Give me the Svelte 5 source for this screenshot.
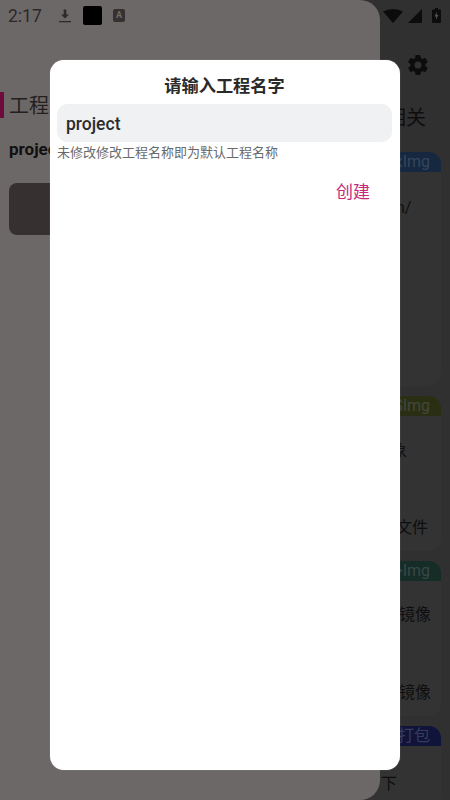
<script>
  const SECTIONS = [
    { tag: 'xImg', tagClass: 'blue', height: 234, rows: [{ text: 'n/', left: 396, top: 15 }] },
    { tag: 'SImg', tagClass: 'olive', height: 155, rows: [{ text: '象', left: 391, top: 13 }, { text: '文件', left: 396, top: 37 }] },
    { tag: '>Img', tagClass: 'green', height: 155, rows: [{ text: '镜像', left: 399, top: 12 }, { text: '镜像', left: 399, top: 38 }] },
    { tag: '打包', tagClass: 'navy', height: 84, rows: [{ text: '下', left: 381, top: 16 }] }
  ];
</script>

<div class="screen">
  <div class="page">
    <div class="page-top">
      <svg class="gear" viewBox="0 0 24 24" width="24" height="24" fill="#0c0c0c">
        <path d="M19.4 13c.04-.32.07-.66.07-1s-.03-.68-.07-1l2.1-1.65a.5.5 0 0 0 .12-.64l-2-3.46a.5.5 0 0 0-.6-.22l-2.49 1a7.3 7.3 0 0 0-1.73-1l-.38-2.65A.49.49 0 0 0 13.93 2h-4a.49.49 0 0 0-.49.42l-.38 2.65c-.63.26-1.2.6-1.73 1l-2.49-1a.5.5 0 0 0-.6.22l-2 3.46a.49.49 0 0 0 .12.64L4.47 11a7.9 7.9 0 0 0 0 2l-2.11 1.65a.5.5 0 0 0-.12.64l2 3.46c.12.22.39.3.6.22l2.49-1c.53.4 1.1.74 1.73 1l.38 2.65c.04.24.25.42.49.42h4c.24 0 .45-.18.49-.42l.38-2.65c.63-.26 1.2-.6 1.73-1l2.49 1c.23.08.48 0 .6-.22l2-3.46a.5.5 0 0 0-.12-.64zM12 15.500a3.500 3.500 0 1 1 0-7 3.500 3.500 0 0 1 0 7z"/>
      </svg>
      <div class="page-title">项目相关</div>
    </div>
    {#each SECTIONS as s}
      <section class="section" style="height:{s.height}px">
        <div class="tag {s.tagClass}">{s.tag}</div>
        {#each s.rows as r}
          <div class="row" style="margin-top:{r.top}px; padding-left:{r.left}px">{r.text}</div>
        {/each}
      </section>
    {/each}
  </div>

  <aside class="drawer">
    <div class="heading">工程</div>
    <div class="name">project</div>
    <div class="card"></div>
  </aside>

  <div class="status">
    <span class="time">2:17</span>
    <svg class="ic-download" viewBox="0 0 14 14" width="14" height="16" fill="#2e2a2a">
      <path d="M5.700 0.500h2.600v5h2.700L7 9.600 3 5.500h2.700zM1 12h12v1.200H1z"/>
    </svg>
    <span class="black-box"></span>
    <span class="a-box">A</span>
    <span class="spacer"></span>
    <svg viewBox="0 0 20 14" width="20" height="14" fill="#0c0c0c"><path d="M0 2.500Q10-2.500 20 2.500L10 14z"/></svg>
    <svg class="ic-signal" viewBox="0 0 14 14" width="14" height="14" fill="#0c0c0c"><path d="M14 0v14H0z"/></svg>
    <svg class="ic-battery" viewBox="0 0 9 15" width="9" height="15" fill="#0c0c0c">
      <path d="M3 0h3v1.500h2a1 1 0 0 1 1 1V14a1 1 0 0 1-1 1H1a1 1 0 0 1-1-1V2.500a1 1 0 0 1 1-1h2z"/>
      <path d="M5 3.500 2.500 8.500H4.300L3.800 12 6.500 7H4.600z" fill="#555"/>
    </svg>
  </div>

  <div class="modal">
    <h2 class="modal-title">请输入工程名字</h2>
    <div class="input">project</div>
    <p class="hint">未修改修改工程名称即为默认工程名称</p>
    <div class="actions">
      <button class="create">创建</button>
    </div>
  </div>
</div>

<style>
  :global(body) {
    margin: 0;
    background: #303031;
  }

  .screen {
    position: relative;
    width: 450px;
    height: 800px;
    overflow: hidden;
    background: #303031;
    font-family: Roboto, "Noto Sans CJK SC", sans-serif;
  }

  .page {
    display: flex;
    flex-direction: column;
    height: 800px;
    padding-top: 53px;
    box-sizing: border-box;
    color: #0e0e0e;
  }

  .page-top {
    display: flex;
    flex-direction: column;
    align-items: flex-end;
    height: 99px;
    flex-shrink: 0;
  }

  .gear {
    margin-right: 20px;
  }

  .page-title {
    margin-top: 27px;
    margin-right: 24px;
    font-size: 20px;
    line-height: 28px;
  }

  .section {
    flex-shrink: 0;
    width: 441px;
    margin-bottom: 10px;
    background: #333334;
    border-radius: 12px;
  }

  .tag {
    height: 20px;
    width: 130px;
    margin-left: auto;
    padding-right: 11px;
    box-sizing: border-box;
    border-radius: 12px 12px 0 0;
    font-size: 16px;
    line-height: 20px;
    text-align: right;
  }

  .tag.blue { background: #162840; color: #34465a; }
  .tag.olive { background: #2a2f14; color: #43473a; }
  .tag.green { background: #162c27; color: #384844; }
  .tag.navy { background: #10143a; color: #383c5c; }

  .row {
    height: 40px;
    display: flex;
    align-items: center;
    box-sizing: border-box;
    font-size: 16px;
  }

  .drawer {
    position: absolute;
    left: 0;
    top: 0;
    width: 380px;
    height: 800px;
    padding-top: 92px;
    box-sizing: border-box;
    display: flex;
    flex-direction: column;
    background: #6d6868;
    border-radius: 0 20px 20px 0;
  }

  .heading {
    height: 26px;
    padding-left: 5px;
    border-left: 4px solid #6e0a3c;
    font-size: 20px;
    line-height: 28px;
    color: #242020;
  }

  .name {
    margin: 20px 0 0 9px;
    font-size: 17px;
    line-height: 22px;
    font-weight: 700;
    color: #121010;
  }

  .card {
    width: 200px;
    height: 52px;
    margin: 23px 0 0 9px;
    background: #363130;
    border-radius: 8px;
  }

  .status {
    position: absolute;
    left: 8px;
    right: 9px;
    top: 0;
    height: 31px;
    display: flex;
    align-items: center;
    color: #2e2a2a;
  }

  .time {
    width: 50px;
    font-size: 17.5px;
    color: #2c2828;
  }

  .ic-download {
    margin-right: 11px;
  }

  .black-box {
    width: 19px;
    height: 19px;
    margin-right: 11px;
    background: #000;
    border-radius: 2px;
  }

  .a-box {
    width: 12px;
    height: 13px;
    background: #353131;
    border-radius: 2px;
    color: #6e6969;
    font-size: 9px;
    font-weight: 700;
    line-height: 13px;
    text-align: center;
  }

  .spacer {
    flex: 1;
  }

  .ic-signal {
    margin: 0 10px 0 5px;
  }

  .modal {
    position: absolute;
    left: 50px;
    top: 60px;
    width: 350px;
    height: 710px;
    padding: 0 8px 0 7px;
    box-sizing: border-box;
    background: #fff;
    border-radius: 14px;
    box-shadow: 0 0 1px rgba(255, 255, 255, 0.5);
  }

  .modal-title {
    margin: 0;
    padding-top: 14px;
    height: 44px;
    box-sizing: border-box;
    font-size: 17.2px;
    line-height: 24px;
    font-weight: 700;
    text-align: center;
    color: #2a2a2a;
  }

  .input {
    height: 38px;
    padding-left: 9px;
    background: #f0f1f3;
    border-radius: 10px;
    font-size: 17.5px;
    font-weight: 500;
    line-height: 40px;
    color: #2c2c2c;
  }

  .hint {
    margin: 1px 0 0;
    font-size: 13px;
    line-height: 20px;
    color: #6a6a6a;
  }

  .actions {
    display: flex;
    justify-content: flex-end;
    margin-top: 17px;
    padding-right: 22px;
  }

  .create {
    padding: 0;
    background: none;
    border: none;
    font: inherit;
    font-size: 17px;
    line-height: 24px;
    color: #c8287c;
  }
</style>
